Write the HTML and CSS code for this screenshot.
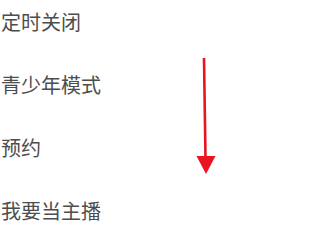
FILE: index.html
```html
<!DOCTYPE html>
<html lang="zh-CN">
<head>
<meta charset="utf-8">
<link rel="stylesheet" href="styles.css">
</head>
<body>
<ul class="menu">
  <li class="item">定时关闭</li>
  <li class="item">青少年模式</li>
  <li class="item">预约</li>
  <li class="item">我要当主播</li>
</ul>
<svg class="arrow" width="285" height="229" viewBox="0 0 285 229">
  <line x1="204" y1="58" x2="205.5" y2="158" stroke="#e8141f" stroke-width="2.6"/>
  <polygon points="196.5,156 215.5,156 206,174" fill="#e8141f"/>
</svg>
</body>
</html>
```
FILE: styles.css
```css
html, body {
  margin: 0;
  padding: 0;
  background: #ffffff;
  width: 285px;
  height: 229px;
  overflow: hidden;
}
body {
  position: relative;
  font-family: "Noto Sans CJK SC", "Noto Sans", sans-serif;
}
.menu {
  list-style: none;
  margin: 0;
  padding: 0 0 0 1px;
}
.item {
  height: 53px;
  padding-top: 10px;
  line-height: 24px;
  font-size: 20px;
  color: #4d4d4d;
}
.arrow {
  position: absolute;
  left: 0;
  top: 0;
}
```
